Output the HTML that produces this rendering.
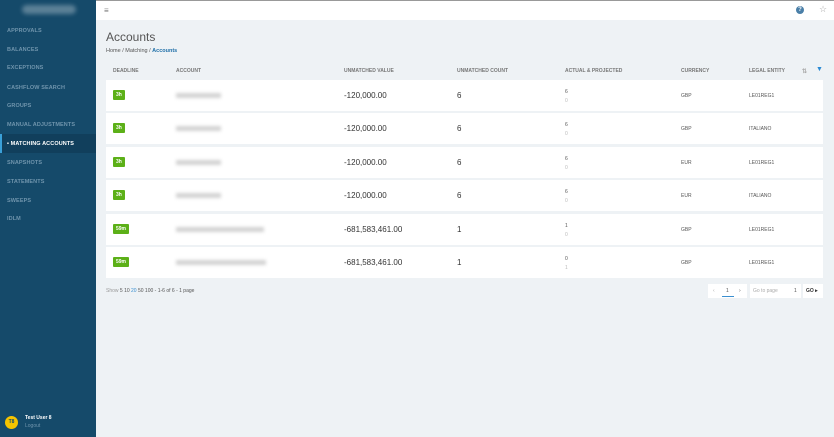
<!DOCTYPE html>
<html><head><style>
*{margin:0;padding:0;box-sizing:border-box}
body{width:834px;height:437px;overflow:hidden;font-family:"Liberation Sans",sans-serif;background:#eef2f5;position:relative}
.sb{position:absolute;left:0;top:0;width:96px;height:437px;background:#154a6a}
.logo{position:absolute;left:22px;top:5px;width:54px;height:9px;border-radius:5px;background:rgba(255,255,255,0.3);filter:blur(2px)}
.nav{position:absolute;left:7px;font-size:5.5px;font-weight:bold;color:#6f94ac;letter-spacing:.1px}
.act{position:absolute;left:0;top:134px;width:96px;height:19px;background:#113f5c;border-left:2px solid #3aa0d8}
.top{position:absolute;left:96px;top:0;width:738px;height:20px;background:#fff;border-top:1px solid #999}
h1{position:absolute;left:106px;top:30px;font-size:12px;font-weight:normal;color:#555}
.bc{position:absolute;left:106px;top:48px;font-size:5.5px;color:#555}
.bc b{color:#1f6fa8}
.th{position:absolute;top:68px;font-size:5px;font-weight:bold;color:#777}
.row{position:absolute;left:106px;width:717px;height:31px;background:#fff}
.row div{position:absolute}
.badge{left:7px;top:10px;background:#5cb018;color:#fff;font-size:5px;font-weight:bold;padding:2px 3px;border-radius:1px}
.acc{left:70px;top:13px;width:45px;height:5px;background:#d4d4d4;filter:blur(1.5px)}
.val{left:238px;top:11px;font-size:8px;color:#333}
.cnt{left:351px;top:11px;font-size:8px;color:#333}
.ap{left:459px;top:8px;font-size:5px;color:#555;line-height:9px}
.ap span{color:#bbb}
.cur{left:575px;top:13px;font-size:5px;color:#555}
.le{left:643px;top:13px;font-size:5px;color:#555}
.ft{position:absolute;left:106px;top:288px;font-size:5px;color:#555}
</style></head><body>
<div class="sb">
<div class="logo"></div>
<div class="act"></div>
<div class="nav" style="top:28px">APPROVALS</div>
<div class="nav" style="top:47px">BALANCES</div>
<div class="nav" style="top:65px">EXCEPTIONS</div>
<div class="nav" style="top:85px">CASHFLOW SEARCH</div>
<div class="nav" style="top:103px">GROUPS</div>
<div class="nav" style="top:122px">MANUAL ADJUSTMENTS</div>
<div class="nav" style="top:141px;color:#fff">• MATCHING ACCOUNTS</div>
<div class="nav" style="top:160px">SNAPSHOTS</div>
<div class="nav" style="top:179px">STATEMENTS</div>
<div class="nav" style="top:198px">SWEEPS</div>
<div class="nav" style="top:216px">IDLM</div>
<div style="position:absolute;left:5px;top:416px;width:13px;height:13px;border-radius:50%;background:#f5c400;font-size:5px;color:#154a6a;text-align:center;line-height:13px;font-weight:bold">T8</div>
<div style="position:absolute;left:25px;top:415px;font-size:5px;color:#fff;font-weight:bold">Test User 8</div>
<div style="position:absolute;left:25px;top:423px;font-size:5px;color:#6f94ac">Logout</div>
</div>
<div class="top">
<div style="position:absolute;left:8px;top:5px;font-size:8px;color:#777">≡</div>
<div style="position:absolute;left:700px;top:5px;width:8px;height:8px;border-radius:50%;background:#4a7fa8;color:#fff;font-size:6px;text-align:center;line-height:8px;font-weight:bold">?</div>
<div style="position:absolute;left:723px;top:3px;font-size:9px;color:#aaa">☆</div>
</div>
<h1>Accounts</h1>
<div class="bc">Home / Matching / <b>Accounts</b></div>
<div class="th" style="left:113px">DEADLINE</div>
<div class="th" style="left:176px">ACCOUNT</div>
<div class="th" style="left:344px">UNMATCHED VALUE</div>
<div class="th" style="left:457px">UNMATCHED COUNT</div>
<div class="th" style="left:565px">ACTUAL &amp; PROJECTED</div>
<div class="th" style="left:681px">CURRENCY</div>
<div class="th" style="left:749px">LEGAL ENTITY</div>
<div class="th" style="left:802px;color:#aaa;font-size:6px">⇅</div>
<div class="th" style="left:816px;color:#2a8ad4;font-size:7px;top:66px">▼</div>

<div class="row" style="top:80px"><div class="badge">3h</div><div class="acc"></div><div class="val">-120,000.00</div><div class="cnt">6</div><div class="ap">6<br><span>0</span></div><div class="cur">GBP</div><div class="le">LE01REG1</div></div>
<div class="row" style="top:113px"><div class="badge">3h</div><div class="acc"></div><div class="val">-120,000.00</div><div class="cnt">6</div><div class="ap">6<br><span>0</span></div><div class="cur">GBP</div><div class="le">ITALIANO</div></div>
<div class="row" style="top:147px"><div class="badge">3h</div><div class="acc"></div><div class="val">-120,000.00</div><div class="cnt">6</div><div class="ap">6<br><span>0</span></div><div class="cur">EUR</div><div class="le">LE01REG1</div></div>
<div class="row" style="top:180px"><div class="badge">3h</div><div class="acc"></div><div class="val">-120,000.00</div><div class="cnt">6</div><div class="ap">6<br><span>0</span></div><div class="cur">EUR</div><div class="le">ITALIANO</div></div>
<div class="row" style="top:214px"><div class="badge">59m</div><div class="acc" style="width:88px"></div><div class="val">-681,583,461.00</div><div class="cnt">1</div><div class="ap">1<br><span>0</span></div><div class="cur">GBP</div><div class="le">LE01REG1</div></div>
<div class="row" style="top:247px"><div class="badge">59m</div><div class="acc" style="width:90px"></div><div class="val">-681,583,461.00</div><div class="cnt">1</div><div class="ap">0<br><span>1</span></div><div class="cur">GBP</div><div class="le">LE01REG1</div></div>

<div class="ft"><span style="color:#999">Show</span> 5 10 <span style="color:#3a8fd0">20</span> 50 100 - 1-6 of 6 - 1 page</div>
<div style="position:absolute;left:708px;top:284px;width:39px;height:14px;background:#fff;font-size:5px;color:#555">
<span style="position:absolute;left:5px;top:4px;color:#aaa">‹</span><span style="position:absolute;left:18px;top:4px">1</span><span style="position:absolute;left:14px;top:12px;width:12px;height:1px;background:#3a8fd0"></span><span style="position:absolute;left:31px;top:4px">›</span></div>
<div style="position:absolute;left:750px;top:284px;width:51px;height:14px;background:#fff;font-size:5px;color:#aaa"><span style="position:absolute;left:3px;top:4px">Go to page</span><span style="position:absolute;left:44px;top:4px;color:#555">1</span></div>
<div style="position:absolute;left:803px;top:284px;width:20px;height:14px;background:#fff;font-size:5px;color:#333;font-weight:bold"><span style="position:absolute;left:3px;top:4px">GO ▸</span></div>
</body></html>
